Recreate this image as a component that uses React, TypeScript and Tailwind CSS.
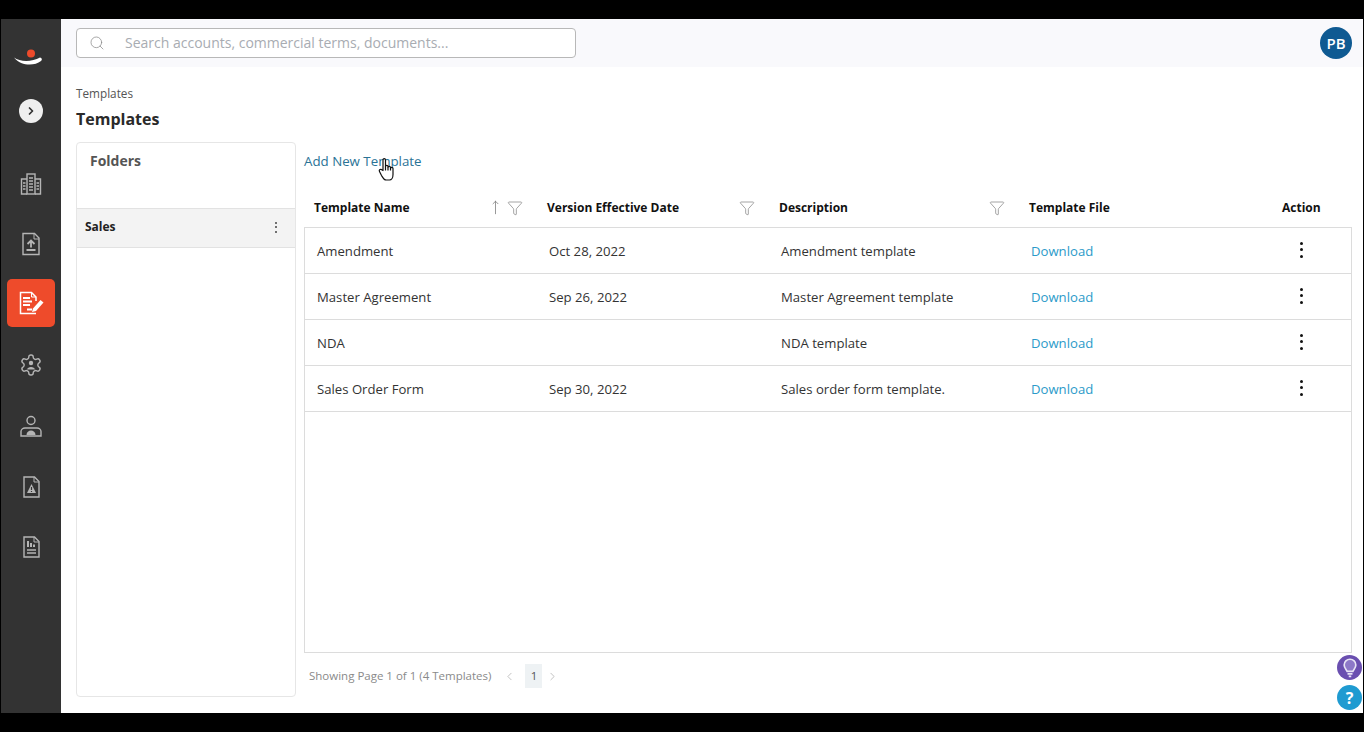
import { ChevronLeft, ChevronRight, ChevronRight as Arrow, Funnel, MoveUp, Search } from "lucide-react";

const rows = [
  { name: "Amendment", date: "Oct 28, 2022", description: "Amendment template" },
  { name: "Master Agreement", date: "Sep 26, 2022", description: "Master Agreement template" },
  { name: "NDA", date: "", description: "NDA template" },
  { name: "Sales Order Form", date: "Sep 30, 2022", description: "Sales order form template." },
];

function Kebab({ size = "big" }: { size?: "big" | "small" }) {
  const dot = size === "big" ? "w-[3px] h-[3px] bg-[#111]" : "w-[2px] h-[2px] bg-[#444]";
  const gap = size === "big" ? "gap-[3.5px]" : "gap-[2.5px]";
  return (
    <div className={`flex flex-col items-center ${gap}`}>
      <span className={`block rounded-full ${dot}`} />
      <span className={`block rounded-full ${dot}`} />
      <span className={`block rounded-full ${dot}`} />
    </div>
  );
}

function NavIcon({ children }: { children: React.ReactNode }) {
  return (
    <svg viewBox="0 0 24 24" className="w-[24px] h-[24px]" fill="none" stroke="#b5b5b5" strokeWidth="1.4">
      {children}
    </svg>
  );
}

function Sidebar() {
  return (
    <aside className="w-[60px] ml-px shrink-0 bg-[#333333] flex flex-col items-center">
      {/* Logo */}
      <svg viewBox="0 0 30 20" className="w-[30px] h-[20px] mt-[29px] mr-[4px]">
        <circle cx="17" cy="5.500" r="4" fill="#ee4b2b" />
        <path d="M0 9.500C6 14 18 14 26 9.500c2 .5 2.500 2.500 1 3.500C20 18.500 7 18 0 9.500z" fill="#fff" />
      </svg>
      <div className="w-6 h-6 mt-[31px] rounded-full bg-[#efefef] flex items-center justify-center">
        <Arrow size={12} strokeWidth={3.5} className="text-[#333]" />
      </div>

      <div className="mt-[49px] h-6 flex items-center">
        <NavIcon>
          <rect x="8" y="2" width="8" height="20" />
          <path d="M8 7H2.500v15H8M16 7h5.500v15H16M10 6h4M10 9h4M10 12h4M10 15h4M10 18h4M4 11h2.500M4 14h2.500M4 17h2.500M17.500 11H20M17.500 14H20M17.500 17H20" />
        </NavIcon>
      </div>
      <div className="mt-[36px] h-6 flex items-center">
        <NavIcon>
          <path d="M4 1.500h11.500L20 6v16.500H4z" />
          <path d="M15 1.500V7h5" strokeWidth="1" />
          <path d="M12 8.500v7M8.500 12L12 8.500l3.500 3.500M7.500 18h9" strokeWidth="1.800" />
        </NavIcon>
      </div>
      <div className="mt-[23px] w-12 h-12 rounded-[5px] bg-[#ee4b2b] flex items-center justify-center">
        <svg viewBox="0 0 26 24" className="w-[26px] h-[24px] ml-[2px]" fill="none" stroke="#fff" strokeWidth="1.500">
          <path d="M17 22.500H1.500V1.500h11l4.500 4.500v4" />
          <path d="M12.500 1.500V6H17" strokeWidth="1" />
          <path d="M4 7h7M4 10.500h9M4 14h7M8 18.500h5" strokeWidth="1.800" />
          <path d="M14 17.500l7.500-8.500 3 2.500-7.500 8.500-4 1z" fill="#fff" stroke="none" />
        </svg>
      </div>
      <div className="mt-[26px] h-6 flex items-center">
        <NavIcon>
          <path d="M12.220 2h-.44a2 2 0 0 0-2 2v.18a2 2 0 0 1-1 1.730l-.43.25a2 2 0 0 1-2 0l-.15-.08a2 2 0 0 0-2.730.73l-.22.38a2 2 0 0 0 .73 2.730l.15.1a2 2 0 0 1 1 1.720v.51a2 2 0 0 1-1 1.740l-.15.09a2 2 0 0 0-.73 2.730l.22.38a2 2 0 0 0 2.730.73l.15-.08a2 2 0 0 1 2 0l.43.25a2 2 0 0 1 1 1.730V20a2 2 0 0 0 2 2h.44a2 2 0 0 0 2-2v-.18a2 2 0 0 1 1-1.730l.43-.25a2 2 0 0 1 2 0l.15.08a2 2 0 0 0 2.730-.73l.22-.39a2 2 0 0 0-.73-2.730l-.15-.08a2 2 0 0 1-1-1.740v-.5a2 2 0 0 1 1-1.740l.15-.09a2 2 0 0 0 .73-2.730l-.22-.38a2 2 0 0 0-2.730-.73l-.15.08a2 2 0 0 1-2 0l-.43-.25a2 2 0 0 1-1-1.730V4a2 2 0 0 0-2-2z" />
          <circle cx="12" cy="10" r="2.200" fill="#b5b5b5" stroke="none" />
          <path d="M8 16.500c.5-3.500 7.500-3.500 8 0z" fill="#b5b5b5" stroke="none" />
        </NavIcon>
      </div>
      <div className="mt-[37px] h-6 flex items-center">
        <NavIcon>
          <circle cx="12" cy="6.500" r="4" />
          <path d="M2 22v-4.500c0-2 2-3.500 4-3.500h12c2 0 4 1.500 4 3.500V22z" />
          <path d="M7.500 21c0-6 9-6 9 0z" fill="#b5b5b5" stroke="none" />
        </NavIcon>
      </div>
      <div className="mt-[37px] h-6 flex items-center">
        <NavIcon>
          <path d="M5 2h10.500L20 6.500V22H5z" />
          <path d="M15 2v5h5" strokeWidth="1" />
          <path d="M12.500 9l4.500 9H8z" fill="#b5b5b5" stroke="none" />
          <path d="M12.500 12v3M12.500 16v1" stroke="#333" strokeWidth="1.200" />
        </NavIcon>
      </div>
      <div className="mt-[36px] h-6 flex items-center">
        <NavIcon>
          <path d="M5 2h10.500L20 6.500V22H5z" />
          <path d="M15 2v5h5" strokeWidth="1" />
          <path d="M8 6h2v6H8zM11 8h2v4h-2zM14 9.500h2V12h-2z" fill="#b5b5b5" stroke="none" />
          <path d="M8 15h9M8 18h9" />
        </NavIcon>
      </div>
    </aside>
  );
}

function Filter() {
  return <Funnel size={16} strokeWidth={1} className="text-[#777]" />;
}

function TemplatesTable() {
  return (
    <div className="flex-1 min-w-0 pl-2 flex flex-col">
      <div className="h-[38px] pt-[2px] flex items-center">
        <a className="text-[13.300px] text-[#2a7396]">Add New Template</a>
      </div>
      <div className="h-[46px] mt-px pt-[8px] flex items-center text-[12px] font-bold text-[#111]">
        <div className="w-[233px] pl-[10px] pr-[14px] flex items-center">
          <span>Template Name</span>
          <MoveUp size={15} strokeWidth={1.2} className="ml-auto mr-[4px] text-[#777]" />
          <Filter />
        </div>
        <div className="w-[232px] pl-[10px] pr-[14px] flex items-center justify-between">
          <span>Version Effective Date</span>
          <Filter />
        </div>
        <div className="w-[250px] pl-[10px] pr-[14px] flex items-center justify-between">
          <span>Description</span>
          <Filter />
        </div>
        <div className="flex-1 pl-[10px]">Template File</div>
        <div className="w-[90px] pl-[20px]">Action</div>
      </div>
      <div className="h-[428px] border border-[#dcdcdc] flex flex-col">
        {rows.map((row) => (
          <div key={row.name} className="h-[46px] shrink-0 pt-[4px] border-b border-[#dcdcdc] flex items-center text-[13.150px] text-[#333]">
            <div className="w-[232px] pl-3">{row.name}</div>
            <div className="w-[232px] pl-3">{row.date}</div>
            <div className="w-[250px] pl-3">{row.description}</div>
            <div className="flex-1 pl-3 text-[#2b9ac9]">Download</div>
            <div className="w-[101px] pb-[5px] pl-[50px]">
              <div className="w-[3px]"><Kebab /></div>
            </div>
          </div>
        ))}
      </div>
      <div className="h-[44px] pt-[2px] flex items-center pl-[5px] text-[11.500px] text-[#8a8a8a]">
        <span>Showing Page 1 of 1 (4 Templates)</span>
        <ChevronLeft size={13} strokeWidth={1.3} className="ml-[12px] text-[#aaa]" />
        <span className="ml-[9px] w-[17px] h-[24px] flex items-center justify-center bg-[#eef2f4] text-[#555]">1</span>
        <ChevronRight size={13} strokeWidth={1.3} className="ml-[4px] text-[#aaa]" />
      </div>
    </div>
  );
}

export default function App() {
  return (
    <div className="w-[1364px] h-[732px] bg-black py-[19px] overflow-hidden font-['Open_Sans',sans-serif]">
      <div className="h-[694px] flex relative">
        <Sidebar />
        <main className="flex-1 mr-px min-w-0 bg-white flex flex-col">
          <header className="h-[48px] shrink-0 bg-[#f9f9fc] pl-[15px] pr-[11px] flex items-center justify-between">
            <div className="w-[500px] h-[30px] mt-[-1px] rounded-[4px] border border-[#b8b8b8] bg-white flex items-center pl-[12px]">
              <Search size={16} strokeWidth={1.1} className="text-[#888]" />
              <span className="ml-[20px] text-[14px] text-[#a8acb2]">Search accounts, commercial terms, documents...</span>
            </div>
            <div className="w-8 h-8 rounded-full bg-[#0f5a92] text-white text-[15px] font-semibold flex items-center justify-center">PB</div>
          </header>

          <div className="flex-1 min-h-0 pl-[15px] pr-[11px] flex flex-col">
            <div className="mt-[18px] text-[11.750px] leading-[16px] text-[#555]">Templates</div>
            <h1 className="mt-[7px] text-[16px] leading-[22px] font-bold text-[#2a2a2a]">Templates</h1>
            <div className="mt-[12px] flex h-[555px]">
              <section className="w-[220px] shrink-0 h-[555px] border border-[#e6e6e6] rounded-[4px] flex flex-col">
                <div className="h-[65px] pl-[13px] pt-[7px] text-[14px] font-bold text-[#555]">Folders</div>
                <div className="h-[40px] pb-[2px] bg-[#f3f3f3] border-y border-[#e2e2e2] flex items-center pl-[8px] pr-[18px] justify-between">
                  <span className="text-[12px] font-bold text-[#222]">Sales</span>
                  <Kebab size="small" />
                </div>
              </section>
              <TemplatesTable />
            </div>
          </div>
        </main>

        {/* Hand cursor sits over the link */}
        <svg viewBox="0 0 18 24" className="absolute left-[378px] top-[138px] w-[18px] h-[25px]" fill="#fff" stroke="#111" strokeWidth="1.200" strokeLinejoin="round">
          <path d="M5 13V2.500c0-1.800 2.500-1.800 2.500 0V9c0-1.500 2.500-1.500 2.500 0v1c0-1.500 2.500-1.500 2.500 0v1c0-1.500 2.500-1.500 2.500 0v6c0 3-1.500 5.500-3.500 5.500H8c-2 0-3-2-4.500-4.500L1.500 14c-1-1.800 1.500-3 2.500-1.500z" />
          <path d="M7.500 9v4M10 10v3M12.500 11v2" fill="none" />
        </svg>

        <div className="absolute right-[2px] bottom-[33px] w-[25px] h-[25px] rounded-full bg-[#6a4fb0] flex items-center justify-center">
          <svg viewBox="0 0 24 24" className="w-[20px] h-[20px]" fill="none" stroke="#e8e4f5" strokeWidth="2">
            <path d="M8.500 16c-1-2-3.500-4-3.500-7.500a7 7 0 0 1 14 0c0 3.500-2.500 5.500-3.500 7.500z" fill="#8d78c8" />
            <path d="M9 19h6M10.500 22h3" />
          </svg>
        </div>
        <div className="absolute right-[2px] bottom-[3px] w-[25px] h-[25px] rounded-full bg-[#1f9bd1] text-white text-[16px] font-bold flex items-center justify-center">?</div>
      </div>
    </div>
  );
}
